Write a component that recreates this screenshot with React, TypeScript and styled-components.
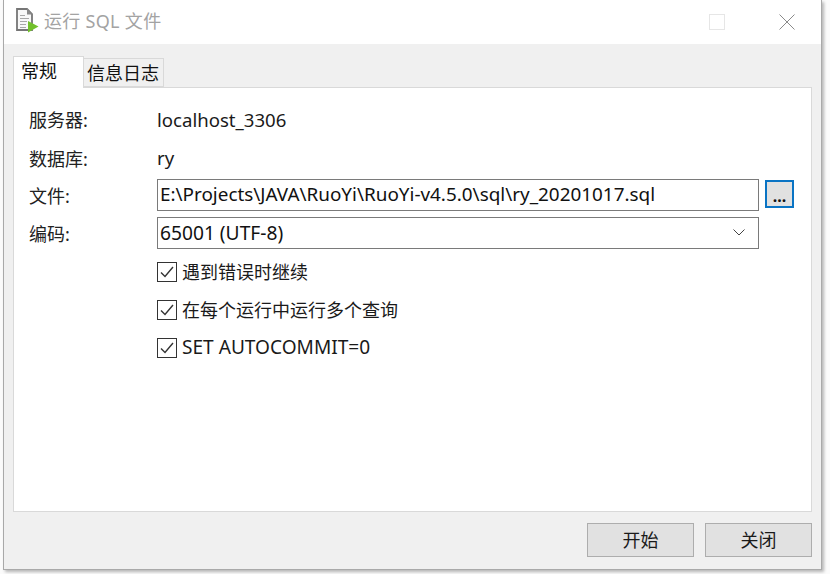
import React from "react";
import styled, { createGlobalStyle } from "styled-components";

const GlobalStyle = createGlobalStyle`
    html, body {
        margin: 0;
        padding: 0;
        background: #f7f7f7;
    }
    body {
        width: 830px;
        height: 574px;
        overflow: hidden;
        font-family: "Noto Sans", "Noto Sans CJK SC", sans-serif;
    }
`;

const Screen = styled.div`
    width: 830px;
    height: 574px;
    padding: 0 8px 4px 3px;
    box-sizing: border-box;
    background: #fbfbfb;
`;

const Window = styled.div`
    width: 819px;
    height: 570px;
    box-sizing: border-box;
    border-left: 1px solid #a9a9a9;
    border-right: 1px solid #a9a9a9;
    border-bottom: 1px solid #a9a9a9;
    box-shadow: 2px 2px 3px rgba(0, 0, 0, 0.28);
    background: #f0f0f0;
    display: flex;
    flex-direction: column;
`;

const TitleBar = styled.div`
    height: 44px;
    box-sizing: border-box;
    flex: none;
    background: #fff;
    display: flex;
    align-items: center;
    padding: 0 0 4px 11px;
`;

const TitleText = styled.span`
    margin-left: 5px;
    font-size: 18px;
    color: #a3a3a3;
    letter-spacing: 0.3px;
`;

const WindowControls = styled.div`
    margin-left: auto;
    display: flex;
    align-items: center;
    gap: 54px;
    padding: 3px 26px 0 0;
`;

const MaximizeBox = styled.div`
    width: 14px;
    height: 14px;
    border: 1px solid #e6e6e6;
`;

const Body = styled.div`
    flex: 1;
    display: flex;
    flex-direction: column;
    padding: 12px 9px 12px 9px;
    min-height: 0;
`;

const TabRow = styled.div`
    display: flex;
    align-items: flex-end;
    height: 31px;
    flex: none;
    position: relative;
    z-index: 1;
`;

const Tab = styled.div<{ $active?: boolean }>`
    box-sizing: border-box;
    height: ${(p) => (p.$active ? "32px" : "29px")};
    margin-bottom: ${(p) => (p.$active ? "-1px" : "0")};
    padding: ${(p) => (p.$active ? "0 26px 0 7px" : "0 4px 0 3px")};
    border: 1px solid #d9d9d9;
    border-bottom: ${(p) => (p.$active ? "none" : "1px solid #d9d9d9")};
    border-left: ${(p) => (p.$active ? "1px solid #d9d9d9" : "none")};
    background: ${(p) => (p.$active ? "#fff" : "#f0f0f0")};
    font-size: 18px;
    line-height: 28px;
    color: #111;
    white-space: nowrap;
`;

const Panel = styled.div`
    flex: 1;
    background: #fff;
    border: 1px solid #d9d9d9;
    padding: 11px 0 0 15px;
    min-height: 0;
`;

const FormRow = styled.div<{ $height: number }>`
    display: grid;
    grid-template-columns: 128px 602px 6px 29px;
    align-items: center;
    height: ${(p) => p.$height}px;
    font-size: 18px;
    color: #1a1a1a;
`;

const Label = styled.span`
    color: #222;
`;

const Value = styled.span`
    font-size: 18.6px;
    color: #1a1a1a;
`;

const Field = styled.div<{ $fontSize: number }>`
    grid-column: 2;
    box-sizing: border-box;
    height: 32px;
    border: 1px solid #7a7a7a;
    display: flex;
    align-items: center;
    justify-content: space-between;
    padding: 0 13px 2px 2px;
    font-size: ${(p) => p.$fontSize}px;
    color: #111;
    white-space: nowrap;
`;

const BrowseButton = styled.div`
    grid-column: 4;
    box-sizing: border-box;
    width: 29px;
    height: 28px;
    margin-bottom: 2px;
    border: 2px solid #0a74c4;
    background: #e1e1e1;
    display: flex;
    align-items: center;
    justify-content: center;
    font-size: 16px;
    font-weight: bold;
    line-height: 1;
    padding-top: 4px;
    color: #111;
`;

const CheckList = styled.div`
    display: flex;
    flex-direction: column;
    gap: 18px;
    margin-top: 10px;
    padding-left: 128px;
`;

const CheckRow = styled.div<{ $fontSize: number }>`
    display: flex;
    align-items: center;
    height: 20px;
    gap: 5px;
    font-size: ${(p) => p.$fontSize}px;
    color: #1a1a1a;
`;

const CheckLabel = styled.span`
    position: relative;
    top: -1px;
`;

const CheckBox = styled.div`
    box-sizing: border-box;
    width: 20px;
    height: 20px;
    border: 1px solid #333;
    display: flex;
    align-items: center;
    justify-content: center;
`;

const Footer = styled.div`
    flex: none;
    display: flex;
    justify-content: flex-end;
    gap: 11px;
    margin-top: 11px;
`;

const FooterButton = styled.div`
    box-sizing: border-box;
    width: 107px;
    height: 34px;
    padding-bottom: 2px;
    background: #e1e1e1;
    border: 1px solid #adadad;
    display: flex;
    align-items: center;
    justify-content: center;
    font-size: 18px;
    color: #1a1a1a;
`;

function FileIcon() {
    return (
        <svg width="24" height="26" viewBox="0 0 24 26">
            <path d="M2 2h10l5 5v16H2z" fill="#f8f8f8" stroke="#767676" strokeWidth="1.8" />
            <path d="M12 1.5v6h5.5z" fill="#8a8a8a" />
            <path d="M5 8.5h5M5 11.5h9M5 14.5h7M5 17.5h6M5 20.5h6" stroke="#a8a8a8" strokeWidth="1" />
            <path d="M13 14l10.5 5.5L13 25.5z" fill="#72c02c" />
        </svg>
    );
}

function CheckMark() {
    return (
        <svg width="16" height="14" viewBox="0 0 16 14">
            <path d="M2 7.5l4 4 8-9.5" fill="none" stroke="#333" strokeWidth="1.4" />
        </svg>
    );
}

const checks = [
    { text: "遇到错误时继续", fontSize: 18 },
    { text: "在每个运行中运行多个查询", fontSize: 18 },
    { text: "SET AUTOCOMMIT=0", fontSize: 19.1 },
];

export default function App() {
    return (
        <Screen>
            <GlobalStyle />
            <Window>
                <TitleBar>
                    <FileIcon />
                    <TitleText>运行 SQL 文件</TitleText>
                    <WindowControls>
                        <MaximizeBox />
                        <svg width="16" height="16" viewBox="0 0 16 16">
                            <path d="M0.5 0.5l15 15M15.5 0.5l-15 15" stroke="#8a8a8a" strokeWidth="1" />
                        </svg>
                    </WindowControls>
                </TitleBar>
                <Body>
                    <TabRow>
                        <Tab $active>常规</Tab>
                        <Tab>信息日志</Tab>
                    </TabRow>
                    <Panel>
                        <FormRow $height={40}>
                            <Label>服务器:</Label>
                            <Value>localhost_3306</Value>
                        </FormRow>
                        <FormRow $height={37}>
                            <Label>数据库:</Label>
                            <Value>ry</Value>
                        </FormRow>
                        <FormRow $height={38}>
                            <Label>文件:</Label>
                            <Field $fontSize={18.9}>E:\Projects\JAVA\RuoYi\RuoYi-v4.5.0\sql\ry_20201017.sql</Field>
                            <BrowseButton>...</BrowseButton>
                        </FormRow>
                        <FormRow $height={38}>
                            <Label>编码:</Label>
                            <Field $fontSize={19.2}>
                                65001 (UTF-8)
                                <svg width="12" height="7" viewBox="0 0 12 7">
                                    <path d="M0.5 0.5l5.5 5.5 5.5-5.5" fill="none" stroke="#444" strokeWidth="1" />
                                </svg>
                            </Field>
                        </FormRow>
                        <CheckList>
                            {checks.map((item) => (
                                <CheckRow key={item.text} $fontSize={item.fontSize}>
                                    <CheckBox>
                                        <CheckMark />
                                    </CheckBox>
                                    <CheckLabel>{item.text}</CheckLabel>
                                </CheckRow>
                            ))}
                        </CheckList>
                    </Panel>
                    <Footer>
                        <FooterButton>开始</FooterButton>
                        <FooterButton>关闭</FooterButton>
                    </Footer>
                </Body>
            </Window>
        </Screen>
    );
}
